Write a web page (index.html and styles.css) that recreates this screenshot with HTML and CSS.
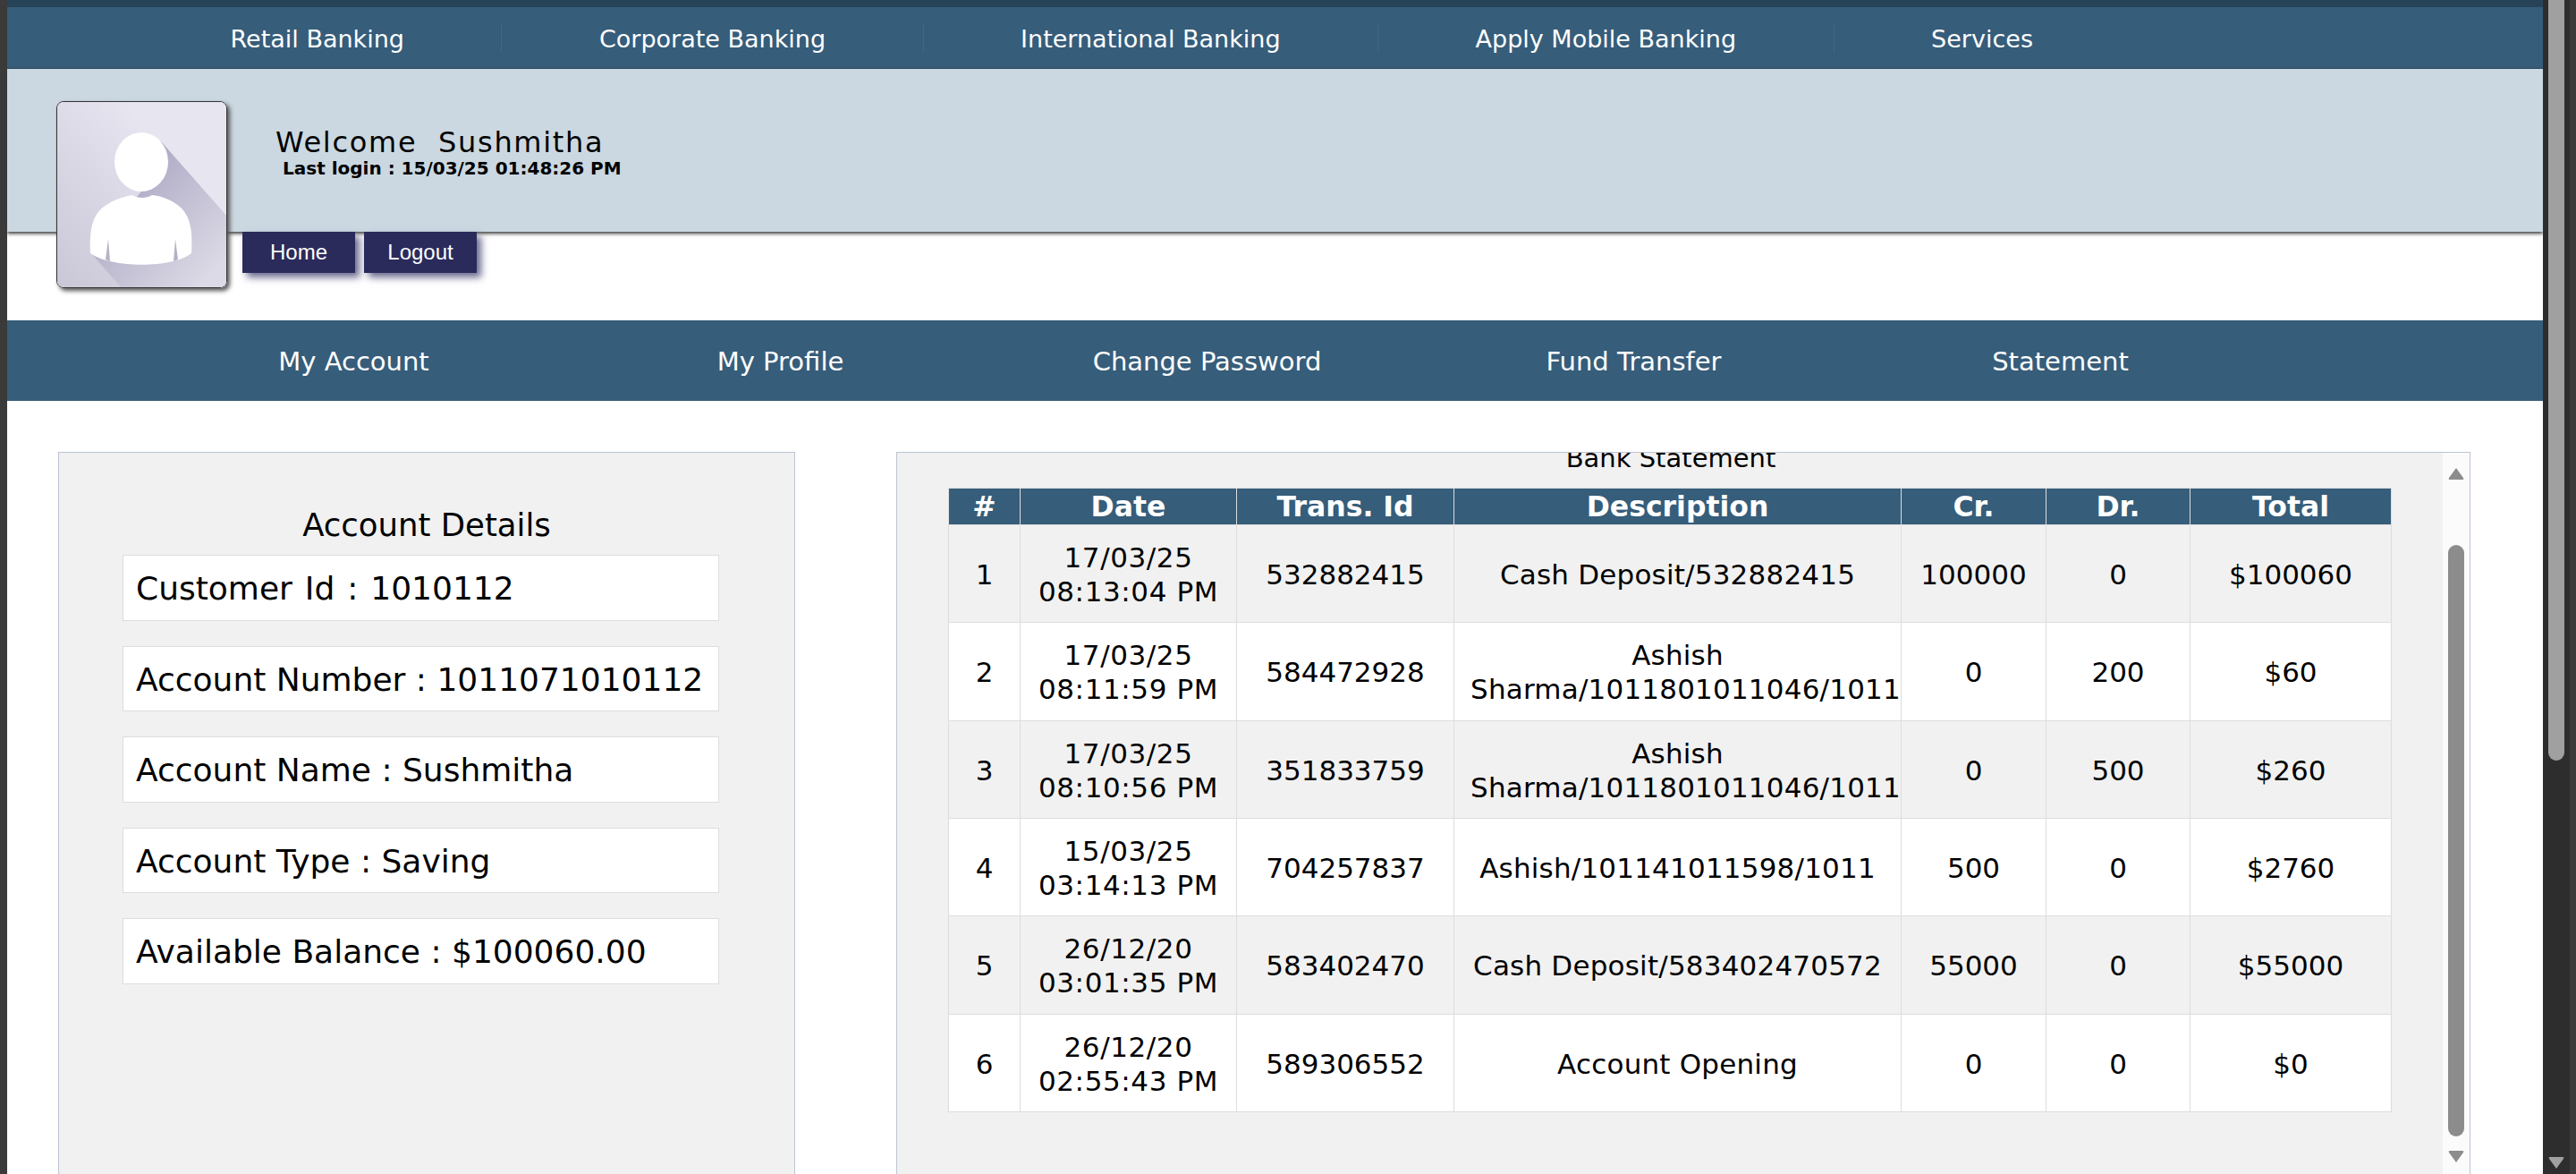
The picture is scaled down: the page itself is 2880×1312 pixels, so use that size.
FILE: index.html
```html
<!DOCTYPE html>
<html lang="en">
<head>
    <meta charset="UTF-8">
    <title>Account Statement</title>
    <link rel="stylesheet" href="styles.css">
</head>
<body>
    <div class="window">
        <div class="page">
            <div class="top-strip"></div>
            <ul class="top-nav">
                <li>Retail Banking</li>
                <li>Corporate Banking</li>
                <li>International Banking</li>
                <li>Apply Mobile Banking</li>
                <li class="no-line">Services</li>
            </ul>
            <div class="user-band">
                <div class="avatar">
                    <svg viewBox="0 0 190 208" width="190" height="208">
                        <defs>
                            <linearGradient id="cardBg" x1="1" y1="0" x2="0" y2="1">
                                <stop offset="0.3" stop-color="#e7e5f0"/>
                                <stop offset="1" stop-color="#c9c6d6"/>
                            </linearGradient>
                            <linearGradient id="longShadow" x1="0.2" y1="0.2" x2="0.9" y2="0.9">
                                <stop offset="0" stop-color="#aaa5c2"/>
                                <stop offset="1" stop-color="#dcdae6"/>
                            </linearGradient>
                        </defs>
                        <rect width="190" height="208" fill="url(#cardBg)"/>
                        <polygon points="116,44 190,128 190,208 72,208 37,168 94,100" fill="url(#longShadow)"/>
                        <ellipse cx="94" cy="67" rx="30" ry="33" fill="#fff"/>
                        <path d="M37 169 C36 150 37 128 52 117 C64 108 78 105 84 104 C90 108 100 108 106 104 C116 105 128 109 137 117 C151 129 151 150 150 169 C130 186 60 186 37 169 Z" fill="#fff"/>
                        <path d="M57 153 L59 178 L54 176 Z M132 153 L130 178 L135 176 Z" fill="#b5b1c8"/>
                    </svg>
                </div>
                <div class="welcome">
                    <div class="welcome-name">Welcome&nbsp; Sushmitha</div>
                    <div class="last-login">Last login : 15/03/25 01:48:26 PM</div>
                </div>
                <div class="user-btns">
                    <a class="user-btn">Home</a>
                    <a class="user-btn">Logout</a>
                </div>
            </div>
            <ul class="main-nav">
                <li>My Account</li>
                <li>My Profile</li>
                <li>Change Password</li>
                <li>Fund Transfer</li>
                <li>Statement</li>
            </ul>
            <div class="content">
                <div class="panel details">
                    <h3 class="details-title">Account Details</h3>
                    <div class="detail-row detail-wide">Customer Id : 1010112</div>
                    <div class="detail-row">Account Number : 1011071010112</div>
                    <div class="detail-row">Account Name : Sushmitha</div>
                    <div class="detail-row">Account Type : Saving</div>
                    <div class="detail-row">Available Balance : $100060.00</div>
                </div>
                <div class="panel statement">
                    <h3 class="statement-title">Bank Statement</h3>
                    <table class="statement-table">
                        <colgroup>
                            <col class="c-num"><col class="c-date"><col class="c-id"><col class="c-desc"><col class="c-cr"><col class="c-dr"><col class="c-total">
                        </colgroup>
                        <thead>
                            <tr><th>#</th><th>Date</th><th>Trans. Id</th><th>Description</th><th>Cr.</th><th>Dr.</th><th>Total</th></tr>
                        </thead>
                        <tbody>
                            <tr><td>1</td><td class="cell-date">17/03/25<br>08:13:04 PM</td><td>532882415</td><td class="cell-desc">Cash Deposit/532882415</td><td>100000</td><td>0</td><td>$100060</td></tr>
                            <tr><td>2</td><td class="cell-date">17/03/25<br>08:11:59 PM</td><td>584472928</td><td class="cell-desc">Ashish Sharma/1011801011046/1011</td><td>0</td><td>200</td><td>$60</td></tr>
                            <tr><td>3</td><td class="cell-date">17/03/25<br>08:10:56 PM</td><td>351833759</td><td class="cell-desc">Ashish Sharma/1011801011046/1011</td><td>0</td><td>500</td><td>$260</td></tr>
                            <tr><td>4</td><td class="cell-date">15/03/25<br>03:14:13 PM</td><td>704257837</td><td class="cell-desc">Ashish/101141011598/1011</td><td>500</td><td>0</td><td>$2760</td></tr>
                            <tr><td>5</td><td class="cell-date">26/12/20<br>03:01:35 PM</td><td>583402470</td><td class="cell-desc">Cash Deposit/583402470572</td><td>55000</td><td>0</td><td>$55000</td></tr>
                            <tr><td>6</td><td class="cell-date">26/12/20<br>02:55:43 PM</td><td>589306552</td><td class="cell-desc">Account Opening</td><td>0</td><td>0</td><td>$0</td></tr>
                        </tbody>
                    </table>
                    <div class="inner-scroll">
                        <svg class="arrow arrow-up" viewBox="0 0 18 14" width="18" height="14"><path d="M9 1 L17 12 Q18 14 16 14 L2 14 Q0 14 1 12 Z" fill="#8c8c8c"/></svg>
                        <div class="inner-thumb"></div>
                        <svg class="arrow arrow-down" viewBox="0 0 18 14" width="18" height="14"><path d="M9 13 L17 2 Q18 0 16 0 L2 0 Q0 0 1 2 Z" fill="#8c8c8c"/></svg>
                    </div>
                </div>
            </div>
        </div>
        <div class="page-scroll">
            <div class="page-thumb"></div>
            <svg class="page-arrow" viewBox="0 0 18 14" width="18" height="14"><path d="M9 13 L17 2 Q18 0 16 0 L2 0 Q0 0 1 2 Z" fill="#a0a0a0"/></svg>
        </div>
    </div>
</body>
</html>
```

FILE: styles.css
```css
* {
    margin: 0;
    padding: 0;
    box-sizing: border-box;
}
html,
body {
    height: 100%;
    overflow: hidden;
}
body {
    font-family: "DejaVu Sans", Verdana, sans-serif;
    background: #3a3a3a;
    color: #000;
}
ul {
    list-style: none;
}
.window {
    display: flex;
    height: 1312px;
    padding: 0 7px 0 8px;
    overflow: hidden;
}
.page {
    width: 2835px;
    height: 1312px;
    background: #fff;
    overflow: hidden;
}
.top-strip {
    height: 8px;
    background: #274358;
}
.top-nav {
    display: flex;
    align-items: center;
    height: 69px;
    padding-left: 141px;
    background: #365d7a;
    border-bottom: 1px solid #2b4c64;
}
.top-nav li {
    height: 32px;
    line-height: 36px;
    padding: 0 108.5px;
    font-size: 27px;
    color: #fff;
    border-right: 1px solid #41678a;
}
.top-nav .no-line {
    border-right: 0;
}
.user-band {
    position: relative;
    height: 182px;
    background: #cbd8e1;
    box-shadow: 0 2px 4px #333;
}
.avatar {
    position: absolute;
    left: 55px;
    top: 36px;
    width: 191px;
    height: 209px;
    border: 1px solid #333;
    border-radius: 8px;
    overflow: hidden;
    box-shadow: 3px 3px 5px #555;
}
.avatar svg {
    display: block;
}
.welcome {
    padding: 66px 0 0 300px;
}
.welcome-name {
    font-size: 32px;
    line-height: 32px;
    letter-spacing: 1.7px;
}
.last-login {
    margin: 3px 0 0 8px;
    font-size: 20px;
    line-height: 20px;
    font-weight: bold;
}
.user-btns {
    position: absolute;
    left: 263px;
    top: 182px;
    display: flex;
    gap: 10px;
}
.user-btn {
    width: 126px;
    height: 46px;
    line-height: 46px;
    text-align: center;
    font-family: "Liberation Sans", Arial, sans-serif;
    font-size: 24px;
    color: #fff;
    background: #2a2b5b;
    box-shadow: 5px 5px 8px #6a6a90;
}
.main-nav {
    display: flex;
    height: 90px;
    margin-top: 99px;
    padding-left: 149px;
    background: #365d7a;
}
.main-nav li {
    width: 477px;
    line-height: 93px;
    text-align: center;
    font-size: 29px;
    color: #fff;
}
.content {
    display: flex;
    gap: 113px;
    padding: 57px 0 0 57px;
}
.panel {
    position: relative;
    height: 900px;
    background: #f1f1f1;
    border: 1px solid #bcc3d3;
    overflow: hidden;
}
.details {
    width: 824px;
    padding: 0 0 0 71px;
}
.details-title {
    width: 680px;
    margin: 54px 0 6px;
    text-align: center;
    font-size: 35.5px;
    line-height: 54px;
    font-weight: normal;
}
.detail-row {
    width: 667px;
    height: 73.5px;
    margin-bottom: 28px;
    padding-left: 14px;
    line-height: 74px;
    font-size: 36px;
    white-space: nowrap;
    background: #fff;
    border: 1px solid #ddd;
}
.detail-wide {
    word-spacing: 2.5px;
}
.statement {
    width: 1760px;
}
.statement-title {
    margin: -12px 28px 0 0;
    text-align: center;
    font-size: 29px;
    line-height: 36px;
    font-weight: normal;
}
.statement-table {
    width: 1613px;
    margin: 15px 0 0 57px;
    table-layout: fixed;
    border-collapse: collapse;
    font-size: 31px;
    line-height: 38px;
}
.c-num { width: 80px; }
.c-date { width: 242px; }
.c-id { width: 243px; }
.c-desc { width: 500px; }
.c-cr { width: 162px; }
.c-dr { width: 161px; }
.c-total { width: 225px; }
.statement-table th {
    height: 41px;
    padding: 0;
    font-size: 31.5px;
    line-height: 38px;
    color: #fff;
    background: #365d7a;
    border: 1px solid #ddd;
}
.statement-table td {
    height: 109.34px;
    padding: 2px 0 0;
    text-align: center;
    overflow: hidden;
    background: #fff;
    border: 1px solid #ddd;
}
.statement-table tbody tr:nth-child(odd) td {
    background: #f1f1f1;
}
.statement-table .cell-date {
    letter-spacing: 0.6px;
}
.statement-table .cell-desc {
    padding: 2px 18px 0;
    letter-spacing: 0.2px;
}
.inner-scroll {
    position: absolute;
    top: 0;
    right: 0;
    bottom: 0;
    width: 30px;
    background: #fbfbfb;
}
.arrow {
    position: absolute;
    left: 6px;
}
.arrow-up {
    top: 16px;
}
.arrow-down {
    top: 780px;
}
.inner-thumb {
    position: absolute;
    left: 6px;
    top: 103px;
    width: 18px;
    height: 661px;
    border-radius: 9px;
    background: #8c8c8c;
}
.page-scroll {
    position: relative;
    width: 30px;
    background: #2d2d2d;
}
.page-thumb {
    position: absolute;
    left: 6px;
    top: 0;
    width: 18px;
    height: 850px;
    border-radius: 0 0 9px 9px;
    background: #a0a0a0;
}
.page-arrow {
    position: absolute;
    left: 6px;
    top: 1293px;
}
```
